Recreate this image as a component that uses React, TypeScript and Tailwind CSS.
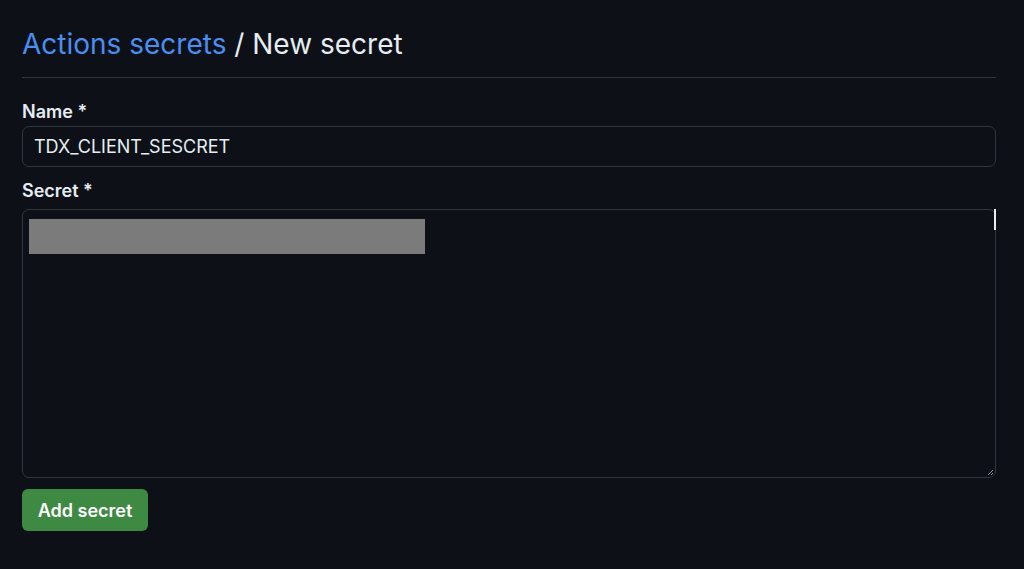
export default function App() {
  return (
    <div className="min-h-screen bg-[#0d1117] pl-[22px] pr-[28px] pt-[25px] text-[#e6edf3]" style={{ fontFamily: 'Inter, "Liberation Sans", sans-serif' }}>
      <h2 className="border-b border-[#30363d] pb-[14px] text-[28px] leading-[38px] font-normal">
        <a className="text-[#4a8ef2]">Actions secrets</a>
        <span> / New secret</span>
      </h2>

      <form className="mt-[22px]">
        <label className="block text-[18px] font-semibold leading-[24px]">Name *</label>
        <div className="mt-[2px] flex h-[41px] items-center rounded-[7px] border border-[#30363d] bg-[#0d1117] px-[11px] text-[18px]">
          TDX_CLIENT_SESCRET
        </div>

        <label className="mt-[12px] block text-[18px] font-semibold leading-[24px]">Secret *</label>
        <div className="relative mt-[6px] h-[269px] rounded-[7px] border border-[#30363d] bg-[#0d1117] pl-[6px] pt-[9px]">
          <div className="h-[35px] w-[396px] bg-[#7b7b7b]" />
          <div className="absolute right-[-1px] top-[-1px] h-[21px] w-[2px] bg-[#e6edf3]" />
          <svg className="absolute bottom-[1px] right-[1px]" width="8" height="8" viewBox="0 0 8 8">
            <path d="M7 2 L2 7 M7 5 L5 7" stroke="#8b949e" strokeWidth="1" />
          </svg>
        </div>

        <button
          type="button"
          className="mt-[11px] h-[42px] w-[126px] rounded-[6px] bg-[#3e8a43] text-[18px] font-semibold text-white"
        >
          Add secret
        </button>
      </form>
    </div>
  );
}
